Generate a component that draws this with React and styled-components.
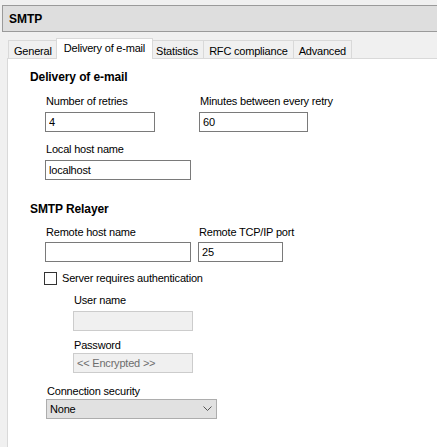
import React from 'react'
import styled, { createGlobalStyle } from 'styled-components'

const GlobalStyle = createGlobalStyle`
	html, body {
		margin: 0;
		padding: 0;
		background: #f0f0f0;
	}
	body {
		font-family: "Liberation Sans", Arial, sans-serif;
		font-size: 11px;
		letter-spacing: -0.2px;
		color: #000;
	}
`

const Window = styled.div`
	width: 437px;
	height: 447px;
	overflow: hidden;
	display: flex;
	flex-direction: column;
	background: #f0f0f0;
`

const Header = styled.div`
	margin: 5px 0 0 2px;
	height: 25px;
	display: flex;
	align-items: center;
	padding-left: 6px;
	border: 1px solid #9a9a9a;
	border-right: none;
	background: #dedede;
	font-size: 12px;
	font-weight: bold;
	letter-spacing: 0;
`

const TabStrip = styled.div`
	display: flex;
	align-items: flex-end;
	height: 20px;
	margin: 6px 0 0 8px;
`

const Tab = styled.div`
	position: relative;
	box-sizing: border-box;
	height: ${p => (p.active ? '21px' : '18px')};
	margin: ${p => (p.active ? '0 -2px -1px -2px' : '0 0 0 -1px')};
	padding: ${p => (p.active ? '2px 7px 0' : '3px 5px 0')};
	line-height: 14px;
	white-space: nowrap;
	border: 1px solid #d9d9d9;
	border-bottom: none;
	background: ${p => (p.active ? '#fff' : '#f0f0f0')};
	z-index: ${p => (p.active ? 1 : 0)};

	&:first-child {
		margin-left: 0;
	}
`

const Panel = styled.div`
	flex: 1;
	margin-left: 7px;
	padding-top: 11px;
	background: #fff;
	border-top: 1px solid #d9d9d9;
	border-left: 1px solid #d9d9d9;
`

const Section = styled.div`
	padding-left: 22px;
	margin-top: ${p => p.top || 0}px;
`

const Heading = styled.div`
	font-size: 12px;
	font-weight: bold;
	line-height: 14px;
	letter-spacing: -0.1px;
`

const Fields = styled.div`
	padding-left: 15px;
`

const Row = styled.div`
	display: flex;
	gap: ${p => p.gap || 44}px;
	margin-top: ${p => p.top || 0}px;
	padding-left: ${p => p.indent || 0}px;
`

const Field = styled.div`
	display: flex;
	flex-direction: column;
	gap: ${p => (p.gap !== undefined ? p.gap : 4)}px;
`

const Label = styled.label`
	line-height: 14px;
	padding-left: 1px;
	white-space: nowrap;
`

const TextBox = styled.input`
	box-sizing: border-box;
	width: ${p => p.w}px;
	height: 20px;
	margin: 0;
	padding: 0 3px;
	font: inherit;
	letter-spacing: inherit;
	color: ${p => (p.disabled ? '#6d6d6d' : '#000')};
	background: ${p => (p.disabled ? '#f0f0f0' : '#fff')};
	border: 1px solid ${p => (p.disabled ? '#cccccc' : '#7a7a7a')};
	border-radius: 0;
	outline: none;
`

const CheckRow = styled.label`
	display: flex;
	align-items: center;
	gap: 5px;
	height: 14px;
	margin-top: 9px;
	margin-left: -1px;
	line-height: 14px;
`

const CheckBox = styled.span`
	box-sizing: border-box;
	width: 13px;
	height: 13px;
	border: 1px solid #333;
	background: #fff;
`

const Combo = styled.div`
	box-sizing: border-box;
	width: 171px;
	height: 20px;
	display: flex;
	align-items: center;
	justify-content: space-between;
	padding: 0 4px 0 3px;
	background: #e1e1e1;
	border: 1px solid #adadad;
`

const tabs = ['General', 'Delivery of e-mail', 'Statistics', 'RFC compliance', 'Advanced']

export default function App() {
	return (
		<>
			<GlobalStyle />
			<Window>
				<Header>SMTP</Header>
				<TabStrip>
					{tabs.map(t => (
						<Tab key={t} active={t === 'Delivery of e-mail'}>
							{t}
						</Tab>
					))}
				</TabStrip>
				<Panel>
					<Section>
						<Heading>Delivery of e-mail</Heading>
						<Fields>
							<Row top={10}>
								<Field>
									<Label>Number of retries</Label>
									<TextBox w={110} value="4" readOnly />
								</Field>
								<Field>
									<Label>Minutes between every retry</Label>
									<TextBox w={109} value="60" readOnly />
								</Field>
							</Row>
							<Row top={10}>
								<Field>
									<Label>Local host name</Label>
									<TextBox w={146} value="localhost" readOnly />
								</Field>
							</Row>
						</Fields>
					</Section>
					<Section top={22}>
						<Heading>SMTP Relayer</Heading>
						<Fields>
							<Row top={9} gap={7}>
								<Field gap={3}>
									<Label>Remote host name</Label>
									<TextBox w={146} value="" readOnly />
								</Field>
								<Field gap={3}>
									<Label>Remote TCP/IP port</Label>
									<TextBox w={85} value="25" readOnly />
								</Field>
							</Row>
							<CheckRow>
								<CheckBox />
								Server requires authentication
							</CheckRow>
							<Row top={8} indent={28}>
								<Field>
									<Label>User name</Label>
									<TextBox w={120} value="" disabled readOnly />
								</Field>
							</Row>
							<Row top={7} indent={28}>
								<Field gap={1}>
									<Label>Password</Label>
									<TextBox w={120} value="<< Encrypted >>" disabled readOnly />
								</Field>
							</Row>
							<Row top={11} indent={1}>
								<Field gap={1}>
									<Label>Connection security</Label>
									<Combo>
										<span>None</span>
										<svg width="9" height="6" viewBox="0 0 9 6">
											<polyline points="0.5,0.5 4.5,4.5 8.5,0.5" fill="none" stroke="#555" strokeWidth="1" />
										</svg>
									</Combo>
								</Field>
							</Row>
						</Fields>
					</Section>
				</Panel>
			</Window>
		</>
	)
}
